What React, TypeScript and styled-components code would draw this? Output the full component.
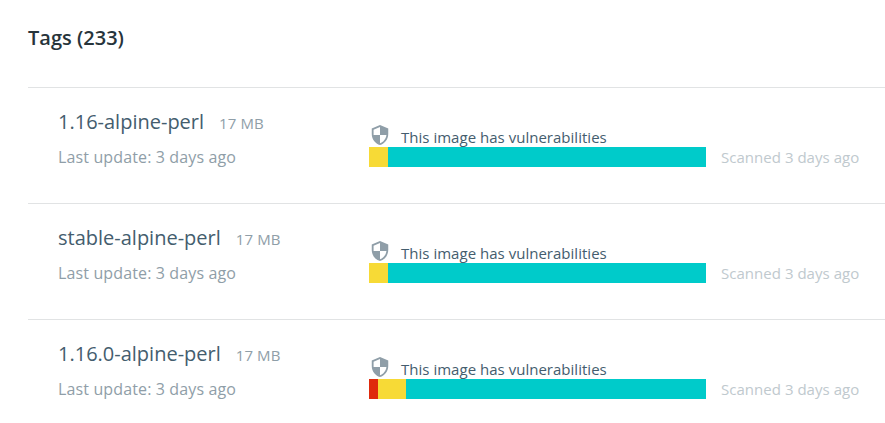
import React from 'react';
import styled, { createGlobalStyle } from 'styled-components';

const GlobalStyle = createGlobalStyle`
  body { margin: 0; background: #fff; overflow: hidden; font-family: 'Open Sans', sans-serif; }
  * { box-sizing: border-box; }
`;
const Page = styled.main`
  height: 423px;
  padding: 24px 0 0 28px;
  overflow: hidden;
`;
const Title = styled.h1`
  margin: 0;
  height: 63px;
  font-size: 20px;
  line-height: 27px;
  font-weight: 600;
  color: #27343b;
`;
const Row = styled.article`
  display: grid;
  grid-template-columns: 311px 337px 1fr;
  height: 116px;
  padding: 19px 0 0 30px;
  border-top: 1px solid #e1e3e4;
  white-space: nowrap;
`;
const NameLine = styled.div`
  display: flex;
  align-items: baseline;
  gap: 15px;
  height: 30px;
  line-height: 30px;
`;
const Name = styled.span`
  font-size: 20px;
  color: #445d6e;
`;
const Size = styled.span`
  font-size: 15px;
  letter-spacing: 0.1px;
  color: #8f9ea8;
`;
const Updated = styled.div`
  margin-top: 8px;
  font-size: 16px;
  line-height: 24px;
  letter-spacing: 0.13px;
  color: #8f9ea8;
`;
const Status = styled.div`
  display: flex;
  gap: 10px;
  height: 22px;
  margin-top: 18px;
  font-size: 15px;
  line-height: 25px;
  letter-spacing: 0.02px;
  color: #445d6e;
`;
const Shield = styled.svg`
  display: block;
  width: 22px;
  height: 22px;
  margin-top: -1px;
  fill: #8f9ea8;
`;
const Bar = styled.div`
  display: flex;
  height: 20px;
  background: #00cbca;
`;
const Segment = styled.i<{ $w: number; $color: string }>`
  width: ${(p) => p.$w}px;
  background: ${(p) => p.$color};
`;
const Scanned = styled.div`
  margin: 39px 0 0 15px;
  font-size: 15px;
  line-height: 22px;
  letter-spacing: 0.03px;
  color: #c0c9ce;
`;

const tags = [
  { name: '1.16-alpine-perl', critical: 0, major: 19 },
  { name: 'stable-alpine-perl', critical: 0, major: 19 },
  { name: '1.16.0-alpine-perl', critical: 9, major: 28 },
];

export default function App() {
  return (
    <Page>
      <GlobalStyle />
      <Title>Tags (233)</Title>
      {tags.map((tag) => (
        <Row key={tag.name}>
          <div>
            <NameLine><Name>{tag.name}</Name><Size>17 MB</Size></NameLine>
            <Updated>Last update: 3 days ago</Updated>
          </div>
          <div>
            <Status>
              <Shield viewBox="0 0 24 24">
                <path d="M12 1 3 5v6c0 5.55 3.84 10.74 9 12 5.16-1.26 9-6.45 9-12V5l-9-4zm0 10.99h7c-.53 4.12-3.28 7.79-7 8.94V12H5V6.3l7-3.11v8.8z" />
              </Shield>
              <span>This image has vulnerabilities</span>
            </Status>
            <Bar>
              <Segment $w={tag.critical} $color="#df2a0c" />
              <Segment $w={tag.major} $color="#f7da36" />
            </Bar>
          </div>
          <Scanned>Scanned 3 days ago</Scanned>
        </Row>
      ))}
    </Page>
  );
}
